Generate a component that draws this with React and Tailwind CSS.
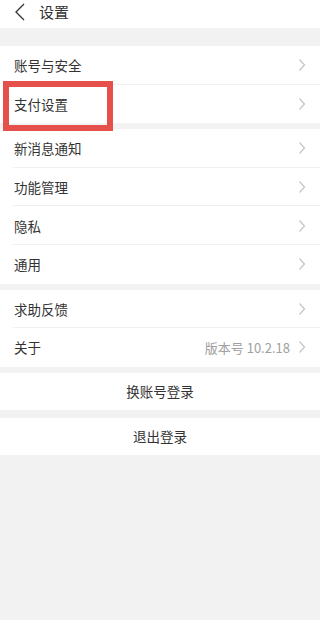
import React from "react";

const Chevron = () => (
  <svg width="8" height="14" viewBox="0 0 8 14" className="shrink-0">
    <path d="M1.5 1.5 L6.5 7 L1.5 12.5" fill="none" stroke="#c4c4c4" strokeWidth="1.2" />
  </svg>
);

function Row({ label, right, last }) {
  return (
    <div className="flex items-center h-[38.6px] pl-[14px] pr-[14px] relative">
      <span className="flex-1 text-[13.5px] text-[#333]">{label}</span>
      {right && <span className="text-[13px] text-[#a0a0a0] mr-[8px]">{right}</span>}
      <Chevron />
      {!last && <div className="absolute left-[13px] right-0 bottom-0 h-px bg-[#f0f0f0]" />}
    </div>
  );
}

export default function App() {
  return (
    <div
      className="w-[320px] h-[620px] bg-[#f2f2f2] overflow-hidden relative"
      style={{ fontFamily: '"Noto Sans CJK SC", "Noto Sans", sans-serif' }}
    >
      <div className="h-[28px] bg-white flex items-center">
        <svg width="12" height="18" viewBox="0 0 12 18" className="ml-[14px] mt-[-4px]">
          <path d="M10 1 L2 9 L10 17" fill="none" stroke="#333" strokeWidth="1.3" />
        </svg>
        <span className="ml-[13px] mt-[-4px] text-[15px] text-[#333]">设置</span>
      </div>
      <div className="mt-[18px] bg-white">
        <Row label="账号与安全" />
        <Row label="支付设置" last />
      </div>
      <div className="mt-[6px] bg-white">
        <Row label="新消息通知" />
        <Row label="功能管理" />
        <Row label="隐私" />
        <Row label="通用" last />
      </div>
      <div className="mt-[6px] bg-white">
        <Row label="求助反馈" />
        <Row label="关于" right="版本号 10.2.18" last />
      </div>
      <div className="mt-[6px] bg-white h-[37px] flex items-center justify-center text-[13.5px] text-[#333]">
        换账号登录
      </div>
      <div className="mt-[8px] bg-white h-[37px] flex items-center justify-center text-[13.5px] text-[#333]">
        退出登录
      </div>
      <div className="absolute left-[3px] top-[81px] w-[110px] h-[50px] border-[6px] border-[#e5504b]" />
    </div>
  );
}
